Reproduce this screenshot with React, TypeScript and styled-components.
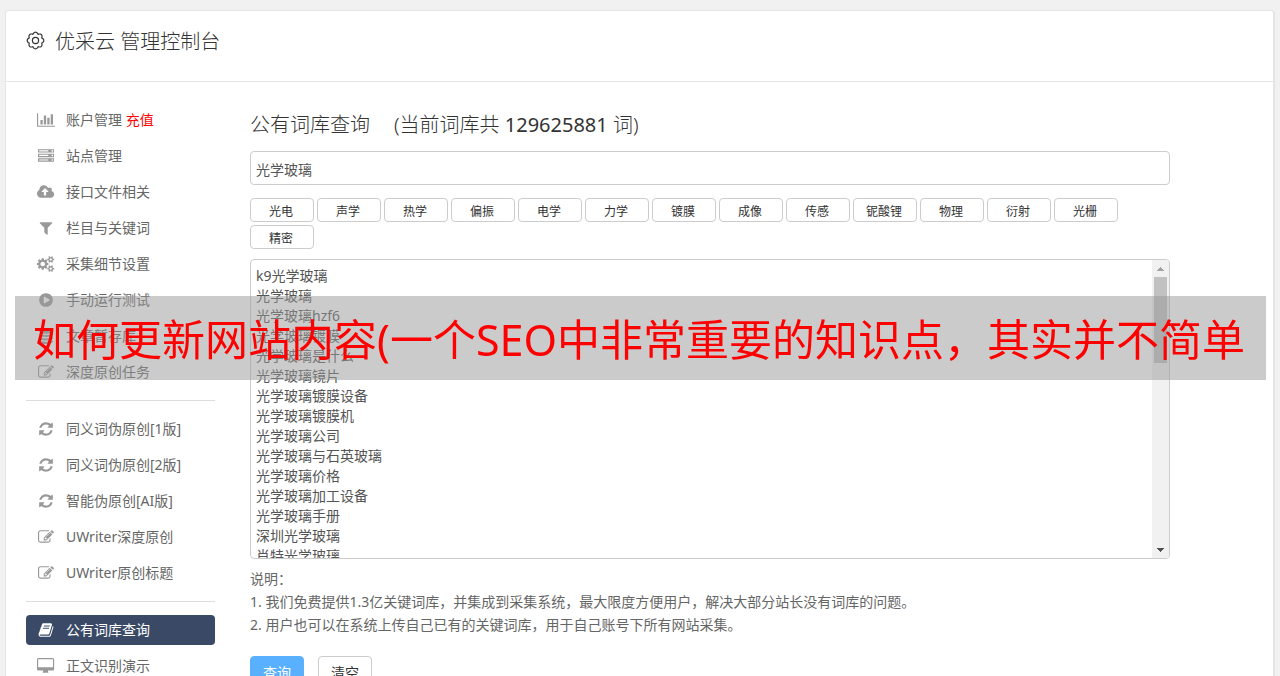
import React, { useRef, useState } from "react";
import styled, { createGlobalStyle } from "styled-components";

const GlobalStyle = createGlobalStyle`
  *, *::before, *::after { box-sizing: border-box; }
  html { overflow-x: hidden; }
  body {
    margin: 0;
    background: #f1f1f1;
    color: #333;
    font: 400 14px/20px "Noto Sans", "Noto Sans CJK SC", sans-serif;
  }
  button, input, textarea { font: inherit; color: inherit; }
`;

type Glyph = { width: number; d: string };

const glyphs = {
  chart: {
    width: 2048,
    d: "M640 896v512h-256v-512h256zm384-512v1024h-256v-1024h256zm1024 1152v128h-2048v-1536h128v1408h1920zm-640-896v768h-256v-768h256zm384-384v1152h-256v-1152h256z",
  },
  server: {
    width: 1792,
    d: "M128 1408h1024v-128h-1024v128zm0-512h1024v-128h-1024v128zm1568 448q0-40-28-68t-68-28-68 28-28 68 28 68 68 28 68-28 28-68zm-1568-960h1024v-128h-1024v128zm1568 448q0-40-28-68t-68-28-68 28-28 68 28 68 68 28 68-28 28-68zm0-512q0-40-28-68t-68-28-68 28-28 68 28 68 68 28 68-28 28-68zm96 832v384h-1792v-384h1792zm0-512v384h-1792v-384h1792zm0-512v384h-1792v-384h1792z",
  },
  cloud: {
    width: 1920,
    d: "M1280 864q0-14-9-23l-352-352q-9-9-23-9t-23 9l-351 351q-10 12-10 24 0 14 9 23t23 9h224v352q0 13 9.5 22.5t22.5 9.5h192q13 0 22.5-9.5t9.5-22.5v-352h224q13 0 22.5-9.5t9.5-22.5zm640 288q0 159-112.5 271.5t-271.5 112.5h-1088q-185 0-316.5-131.5t-131.5-316.5q0-130 70-240t188-165q-2-30-2-43 0-212 150-362t362-150q156 0 285.5 87t188.5 231q71-62 166-62 106 0 181 75t75 181q0 76-41 138 130 31 213.5 135.5t83.5 238.5z",
  },
  filter: {
    width: 1792,
    d: "M1595 295q17 41-14 70l-493 493v742q0 42-39 59-13 5-25 5-27 0-45-19l-256-256q-19-19-19-45v-486l-493-493q-31-29-14-70 17-39 59-39h1280q42 0 59 39z",
  },
  cogs: {
    width: 1920,
    d: "M896 896q0-106-75-181t-181-75-181 75-75 181 75 181 181 75 181-75 75-181zm768 512q0-52-38-90t-90-38-90 38-38 90q0 53 37.5 90.5t90.5 37.5 90.5-37.5 37.5-90.5zm0-1024q0-52-38-90t-90-38-90 38-38 90q0 53 37.5 90.5t90.5 37.5 90.5-37.5 37.5-90.5zm-384 421v185q0 10-7 19.5t-16 10.5l-155 24q-11 35-32 76 34 48 90 115 7 11 7 20 0 12-7 19-23 30-82.5 89.5t-78.5 59.5q-11 0-21-7l-115-90q-37 19-77 31-11 108-23 155-7 24-30 24h-186q-11 0-20-7.5t-10-17.5l-23-153q-34-10-75-31l-118 89q-7 7-20 7-11 0-21-8-144-133-144-160 0-9 7-19 10-14 41-53t47-61q-23-44-35-82l-152-24q-10-1-17-9.5t-7-19.5v-185q0-10 7-19.5t16-10.5l155-24q11-35 32-76-34-48-90-115-7-11-7-20 0-12 7-20 22-30 82-89t79-59q11 0 21 7l115 90q34-18 77-32 11-108 23-154 7-24 30-24h186q11 0 20 7.5t10 17.5l23 153q34 10 75 31l118-89q8-7 20-7 11 0 21 8 144 133 144 160 0 8-7 19-12 16-42 54t-45 60q23 48 34 82l152 23q10 2 17 10.5t7 19.5zm640 533v140q0 16-149 31-12 27-30 52 51 113 51 138 0 4-4 7-122 71-124 71-8 0-46-47t-52-68q-20 2-30 2t-30-2q-14 21-52 68t-46 47q-2 0-124-71-4-3-4-7 0-25 51-138-18-25-30-52-149-15-149-31v-140q0-16 149-31 13-29 30-52-51-113-51-138 0-4 4-7 4-2 35-20t59-34 30-16q8 0 46 46.5t52 67.5q20-2 30-2t30 2q51-71 92-112l6-2q4 0 124 70 4 3 4 7 0 25-51 138 17 23 30 52 149 15 149 31zm0-1024v140q0 16-149 31-12 27-30 52 51 113 51 138 0 4-4 7-122 71-124 71-8 0-46-47t-52-68q-20 2-30 2t-30-2q-14 21-52 68t-46 47q-2 0-124-71-4-3-4-7 0-25 51-138-18-25-30-52-149-15-149-31v-140q0-16 149-31 13-29 30-52-51-113-51-138 0-4 4-7 4-2 35-20t59-34 30-16q8 0 46 46.5t52 67.5q20-2 30-2t30 2q51-71 92-112l6-2q4 0 124 70 4 3 4 7 0 25-51 138 17 23 30 52 149 15 149 31z",
  },
  play: {
    width: 1792,
    d: "M896 128q209 0 385.5 103t279.5 279.5 103 385.5-103 385.5-279.5 279.5-385.5 103-385.5-103-279.5-279.5-103-385.5 103-385.5 279.5-279.5 385.5-103zm384 823q32-18 32-55t-32-55l-544-320q-31-19-64-1-32 19-32 56v640q0 37 32 56 16 8 32 8 17 0 32-9z",
  },
  database: {
    width: 1792,
    d: "M896 768q237 0 443-43t325-127v170q0 69-103 128t-280 93.5-385 34.5-385-34.5-280-93.5-103-128v-170q119 84 325 127t443 43zm0 768q237 0 443-43t325-127v170q0 69-103 128t-280 93.5-385 34.5-385-34.5-280-93.5-103-128v-170q119 84 325 127t443 43zm0-384q237 0 443-43t325-127v170q0 69-103 128t-280 93.5-385 34.5-385-34.5-280-93.5-103-128v-170q119 84 325 127t443 43zm0-1152q208 0 385 34.5t280 93.5 103 128v128q0 69-103 128t-280 93.5-385 34.5-385-34.5-280-93.5-103-128v-128q0-69 103-128t280-93.5 385-34.5z",
  },
  edit: {
    width: 1792,
    d: "M888 1184l116-116-152-152-116 116v56h96v96h56zm440-720q-16-16-33 1l-350 350q-17 17-1 33t33-1l350-350q17-17 1-33zm80 594v190q0 119-84.5 203.5t-203.5 84.5h-832q-119 0-203.5-84.5t-84.5-203.5v-832q0-119 84.5-203.5t203.5-84.5h832q63 0 117 25 15 7 18 23 3 17-9 29l-49 49q-14 14-32 8-23-6-45-6h-832q-66 0-113 47t-47 113v832q0 66 47 113t113 47h832q66 0 113-47t47-113v-126q0-13 9-22l64-64q15-15 35-7t20 29zm-96-738l288 288-672 672h-288v-288zm444 132l-92 92-288-288 92-92q28-28 68-28t68 28l152 152q28 28 28 68t-28 68z",
  },
  refresh: {
    width: 1792,
    d: "M1639 1056q0 5-1 7-64 268-268 434.5t-478 166.5q-146 0-282.5-55t-243.5-157l-129 129q-19 19-45 19t-45-19-19-45v-448q0-26 19-45t45-19h448q26 0 45 19t19 45-19 45l-137 137q71 66 161 102t187 36q134 0 250-65t186-179q11-17 53-117 8-23 30-23h192q13 0 22.5 9.5t9.5 22.5zm25-800v448q0 26-19 45t-45 19h-448q-26 0-45-19t-19-45 19-45l138-138q-148-137-349-137-134 0-250 65t-186 179q-11 17-53 117-8 23-30 23h-199q-13 0-22.5-9.5t-9.5-22.5v-7q65-268 270-434.5t480-166.5q146 0 284 55.5t245 156.5l130-129q19-19 45-19t45 19 19 45z",
  },
  book: {
    width: 1792,
    d: "M1703 478q40 57 18 129l-275 906q-19 64-76.5 107.5t-122.5 43.5h-923q-77 0-148.5-53.5t-99.5-131.5q-24-67-2-127 0-4 3-27t4-37q1-8-3-21.5t-3-19.5q2-11 8-21t16.5-23.5 16.5-23.5q23-38 45-91.5t30-91.5q3-10 .5-30t-.5-28q3-11 17-28t17-23q21-36 42-92t25-90q1-9-2.5-32t.5-28q4-13 22-30.5t22-22.5q19-26 42.5-84.5t27.5-96.5q1-8-3-25.5t-2-26.5q2-8 9-18t18-23 17-21q8-12 16.5-30.5t15-35 16-36 19.5-32 26.5-23.5 36-11.5 47.5 5.5l-1 3q38-9 51-9h761q74 0 114 56t18 130l-274 906q-36 119-71.5 153.5t-128.5 34.5h-869q-27 0-38 15-11 16-1 43 24 70 144 70h923q29 0 56-15.5t35-41.5l300-987q7-22 5-57 38 15 59 43zm-1064 2q-4 13 2 22.5t20 9.5h608q13 0 25.5-9.5t16.5-22.5l21-64q4-13-2-22.5t-20-9.5h-608q-13 0-25.5 9.5t-16.5 22.5zm-83 256q-4 13 2 22.5t20 9.5h608q13 0 25.5-9.5t16.5-22.5l21-64q4-13-2-22.5t-20-9.5h-608q-13 0-25.5 9.5t-16.5 22.5z",
  },
  desktop: {
    width: 1920,
    d: "M1792 992v-832q0-13-9.5-22.5t-22.5-9.5h-1600q-13 0-22.5 9.5t-9.5 22.5v832q0 13 9.5 22.5t22.5 9.5h1600q13 0 22.5-9.5t9.5-22.5zm128-832v1088q0 66-47 113t-113 47h-544q0 37 16 77.5t32 71 16 43.5q0 26-19 45t-45 19h-512q-26 0-45-19t-19-45q0-14 16-44t32-70 16-78h-544q-66 0-113-47t-47-113v-1088q0-66 47-113t113-47h1600q66 0 113 47t47 113z",
  },
} satisfies Record<string, Glyph>;

type IconName = keyof typeof glyphs;

const IconBox = styled.span`
  display: flex;
  justify-content: center;
  flex: none;
  width: 20px;
  svg { display: block; height: 16px; fill: currentColor; }
`;

function Icon({ name }: { name: IconName }) {
  const glyph = glyphs[name];
  return (
    <IconBox aria-hidden="true">
      <svg viewBox={`0 0 ${glyph.width} 1792`}>
        <path d={glyph.d} />
      </svg>
    </IconBox>
  );
}

const Panel = styled.div`
  margin: 10px 5px 0;
  border: 1px solid #e5e5e5;
  border-right-width: 2px;
  border-radius: 4px 4px 0 0;
  background: #fff;
`;

const Header = styled.header`
  display: flex;
  align-items: flex-start;
  gap: 10px;
  height: 71px;
  padding: 16px 20px;
  border-bottom: 1px solid #e5e5e5;
  svg { flex: none; margin-top: 4px; }
`;

const SiteTitle = styled.h1`
  margin: 0;
  font-size: 20px;
  font-weight: 300;
  line-height: 30px;
`;

const Body = styled.div`
  display: flex;
  gap: 35px;
  padding: 23px 20px 0;
`;

const Sidebar = styled.nav`
  display: flex;
  flex-direction: column;
  gap: 6px;
  flex: 0 0 189px;
`;

const NavLink = styled.a<{ $active?: boolean }>`
  display: flex;
  align-items: center;
  gap: 10px;
  height: 30px;
  padding: 0 10px;
  border-radius: 4px;
  color: ${(p) => (p.$active ? "#fff" : "#666")};
  background: ${(p) => (p.$active ? "#3a4a66" : "transparent")};
  text-decoration: none;
  ${IconBox} { color: ${(p) => (p.$active ? "#fff" : "#999")}; }
`;

const Recharge = styled.span`
  color: #f00;
`;

const Divider = styled.hr`
  width: 100%;
  margin: 7px 0;
  border: 0;
  border-top: 1px solid #ddd;
`;

const Main = styled.main`
  display: flex;
  flex-direction: column;
  flex: 1;
  min-width: 0;
  max-width: 920px;
`;

const PageTitle = styled.h2`
  display: flex;
  gap: 24px;
  margin: 5px 0 11px;
  font-size: 20px;
  font-weight: 300;
  line-height: 30px;
`;

const Count = styled.span`
  font-weight: 400;
`;

const SearchInput = styled.input`
  width: 100%;
  height: 34px;
  padding: 1px 5px 0;
  border: 1px solid #ccc;
  border-radius: 4px;
  background: #fff;
  color: #555;
  outline: 0;
`;

const Tags = styled.div`
  display: flex;
  flex-wrap: wrap;
  gap: 3px;
  margin: 13px 0 10px;
`;

const Tag = styled.button`
  width: 64px;
  height: 24px;
  padding: 3px 2px 0 0;
  border: 1px solid #ccc;
  border-radius: 4px;
  background: #fff;
  font-size: 12px;
  line-height: 18px;
`;

const ResultBox = styled.div`
  display: flex;
  height: 300px;
  border: 1px solid #ccc;
  border-radius: 4px;
  background: #fff;
  overflow: hidden;
`;

const Results = styled.textarea`
  flex: 1;
  min-width: 0;
  padding: 6px 5px;
  border: 0;
  background: transparent;
  color: #555;
  resize: none;
  outline: 0;
  overflow-y: scroll;
  scrollbar-width: none;
`;

const ScrollBar = styled.div`
  display: flex;
  flex-direction: column;
  flex: 0 0 17px;
  background: #f1f1f1;
`;

const ScrollArrow = styled.button<{ $dim?: boolean }>`
  display: grid;
  place-items: center;
  flex: none;
  height: 17px;
  padding: 0;
  border: 0;
  background: none;
  svg { display: block; fill: ${(p) => (p.$dim ? "#a3a3a3" : "#505050")}; }
`;

const ScrollTrack = styled.div`
  flex: 1;
  padding: 0 2px;
`;

const ScrollThumb = styled.div`
  height: 86px;
  background: #c1c1c1;
`;

const Notes = styled.div`
  margin-top: 8px;
  color: #666;
  line-height: 23px;
  p { margin: 0; }
`;

const Actions = styled.div`
  display: flex;
  gap: 14px;
  margin: 20px 0 24px;
`;

const ActionButton = styled.button<{ $primary?: boolean }>`
  width: 54px;
  height: 34px;
  padding: 0;
  border: 1px solid ${(p) => (p.$primary ? "#59b0ff" : "#ccc")};
  border-radius: 4px;
  background: ${(p) => (p.$primary ? "#59b0ff" : "#fff")};
  color: ${(p) => (p.$primary ? "#fff" : "#333")};
`;

const Banner = styled.div`
  position: fixed;
  top: 296px;
  left: 15px;
  right: 14px;
  height: 84px;
  padding: 0 18px;
  overflow: hidden;
  background: rgba(151, 151, 151, 0.5);
  color: #f00;
  font-size: 43px;
  line-height: 88px;
  white-space: nowrap;
  pointer-events: none;
`;

type NavItem = { icon: IconName; label: string; extra?: string; active?: boolean };

const navGroups: NavItem[][] = [
  [
    { icon: "chart", label: "账户管理", extra: "充值" },
    { icon: "server", label: "站点管理" },
    { icon: "cloud", label: "接口文件相关" },
    { icon: "filter", label: "栏目与关键词" },
    { icon: "cogs", label: "采集细节设置" },
    { icon: "play", label: "手动运行测试" },
    { icon: "database", label: "文章暂存库" },
    { icon: "edit", label: "深度原创任务" },
  ],
  [
    { icon: "refresh", label: "同义词伪原创[1版]" },
    { icon: "refresh", label: "同义词伪原创[2版]" },
    { icon: "refresh", label: "智能伪原创[AI版]" },
    { icon: "edit", label: "UWriter深度原创" },
    { icon: "edit", label: "UWriter原创标题" },
  ],
  [
    { icon: "book", label: "公有词库查询", active: true },
    { icon: "desktop", label: "正文识别演示" },
  ],
];

const tags = [
  "光电", "声学", "热学", "偏振", "电学", "力学", "镀膜",
  "成像", "传感", "铌酸锂", "物理", "衍射", "光栅", "精密",
];

const keywords = [
  "k9光学玻璃", "光学玻璃", "光学玻璃hzf6", "光学玻璃镀膜", "光学玻璃是什么",
  "光学玻璃镜片", "光学玻璃镀膜设备", "光学玻璃镀膜机", "光学玻璃公司",
  "光学玻璃与石英玻璃", "光学玻璃价格", "光学玻璃加工设备", "光学玻璃手册",
  "深圳光学玻璃", "肖特光学玻璃",
];

// Outline of a wheel with rounded teeth, drawn as a smooth closed line.
function wheelPath(center: number, radius: number, depth: number, teeth: number) {
  const steps = teeth * 12;
  const points = Array.from({ length: steps }, (_, i) => {
    const angle = (i / steps) * Math.PI * 2;
    const wave = Math.abs(Math.cos((teeth * angle) / 2)) * 2 - 1;
    const r = radius + depth * wave;
    return `${(center + r * Math.sin(angle)).toFixed(2)} ${(center - r * Math.cos(angle)).toFixed(2)}`;
  });
  return `M${points.join("L")}Z`;
}

export default function App() {
  const [query, setQuery] = useState("光学玻璃");
  const [results, setResults] = useState(keywords.join("\n"));
  const list = useRef<HTMLTextAreaElement>(null);
  const scroll = (top: number) => list.current?.scrollBy({ top });

  return (
    <>
      <GlobalStyle />
      <Panel>
        <Header>
          <svg width="19" height="19" viewBox="0 0 19 19" fill="none" stroke="#333" strokeWidth="1.2" strokeLinejoin="round" aria-hidden="true">
            <path d={wheelPath(9.5, 7.5, 0.8, 8)} />
            <circle cx="9.5" cy="9.5" r="3.1" />
          </svg>
          <SiteTitle>优采云 管理控制台</SiteTitle>
        </Header>
        <Body>
          <Sidebar>
            {navGroups.map((group, index) => (
              <React.Fragment key={index}>
                {index > 0 && <Divider />}
                {group.map((item) => (
                  <NavLink key={item.label} href="#" $active={item.active}>
                    <Icon name={item.icon} />
                    <span>
                      {item.label}
                      {item.extra && <> <Recharge>{item.extra}</Recharge></>}
                    </span>
                  </NavLink>
                ))}
              </React.Fragment>
            ))}
          </Sidebar>
          <Main>
            <PageTitle>
              <span>公有词库查询</span>
              <span>(当前词库共 <Count>129625881</Count> 词)</span>
            </PageTitle>
            <SearchInput aria-label="关键词" value={query} onChange={(e) => setQuery(e.target.value)} />
            <Tags>
              {tags.map((tag) => (
                <Tag key={tag} type="button" onClick={() => setQuery(tag)}>{tag}</Tag>
              ))}
            </Tags>
            <ResultBox>
              <Results ref={list} aria-label="查询结果" value={results} onChange={(e) => setResults(e.target.value)} />
              <ScrollBar>
                <ScrollArrow type="button" $dim aria-label="向上" onClick={() => scroll(-20)}>
                  <svg width="7" height="4" viewBox="0 0 7 4" shapeRendering="crispEdges">
                    <path d="M3 0h1v1h1v1h1v1h1v1H0V3h1V2h1V1h1z" />
                  </svg>
                </ScrollArrow>
                <ScrollTrack>
                  <ScrollThumb />
                </ScrollTrack>
                <ScrollArrow type="button" aria-label="向下" onClick={() => scroll(20)}>
                  <svg width="7" height="4" viewBox="0 0 7 4" shapeRendering="crispEdges">
                    <path d="M0 0h7v1H6v1H5v1H4v1H3V3H2V2H1V1H0z" />
                  </svg>
                </ScrollArrow>
              </ScrollBar>
            </ResultBox>
            <Notes>
              <p>说明：</p>
              <p>1. 我们免费提供1.3亿关键词库，并集成到采集系统，最大限度方便用户，解决大部分站长没有词库的问题。</p>
              <p>2. 用户也可以在系统上传自己已有的关键词库，用于自己账号下所有网站采集。</p>
            </Notes>
            <Actions>
              <ActionButton type="button" $primary>查询</ActionButton>
              <ActionButton type="button" onClick={() => setResults("")}>清空</ActionButton>
            </Actions>
          </Main>
        </Body>
      </Panel>
      <Banner>如何更新网站内容(一个SEO中非常重要的知识点，其实并不简单</Banner>
    </>
  );
}
